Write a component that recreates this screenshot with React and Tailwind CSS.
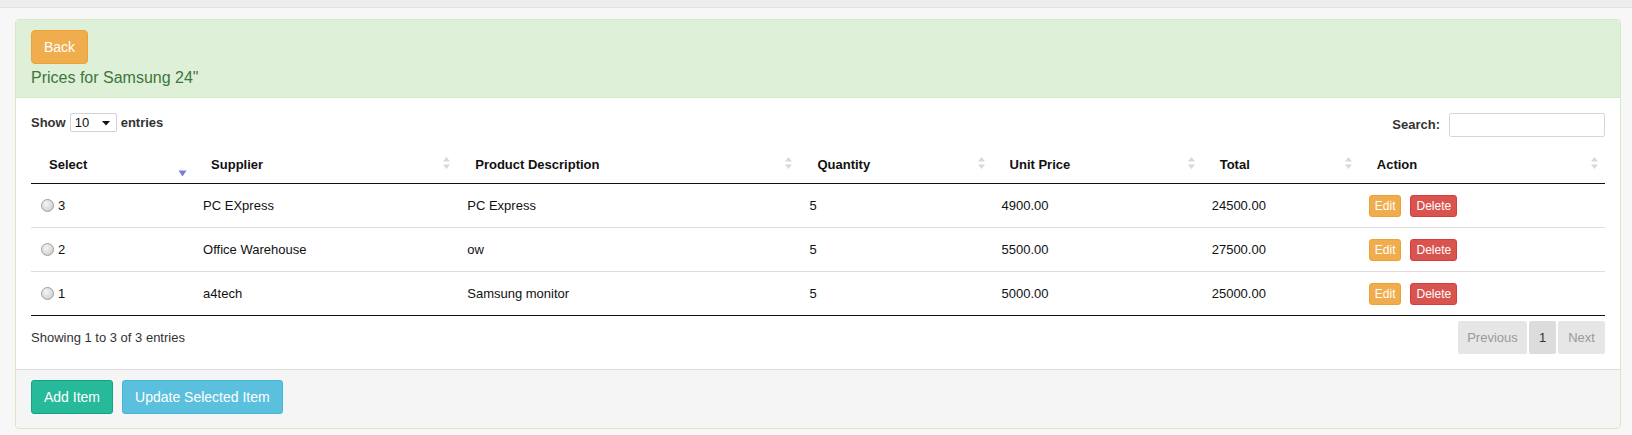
import React from 'react';

// rows shown in the price table
const prices = [
  { id: 3, supplier: 'PC EXpress', description: 'PC Express', qty: 5, unit: '4900.00', total: '24500.00' },
  { id: 2, supplier: 'Office Warehouse', description: 'ow', qty: 5, unit: '5500.00', total: '27500.00' },
  { id: 1, supplier: 'a4tech', description: 'Samsung monitor', qty: 5, unit: '5000.00', total: '25000.00' },
];

const columns = [
  { label: 'Select', width: 'w-[162px]', sort: 'asc' },
  { label: 'Supplier', width: 'w-[264px]' },
  { label: 'Product Description', width: 'w-[342px]' },
  { label: 'Quantity', width: 'w-[192px]' },
  { label: 'Unit Price', width: 'w-[210px]' },
  { label: 'Total', width: 'w-[157px]' },
  { label: 'Action', width: 'w-[246px]' },
];

const SortBoth = () => (
  <svg width="9" height="14" viewBox="0 0 9 14" className="absolute right-[6px] top-1/2 -translate-y-1/2">
    <path d="M4.5 1 L8 5.5 L1 5.5 Z" fill="#d8d8d8" />
    <path d="M4.5 13 L8 8.5 L1 8.5 Z" fill="#d8d8d8" />
  </svg>
);

const SortAsc = () => (
  <svg width="9" height="7" viewBox="0 0 9 7" className="absolute right-[6px] top-[27px]">
    <path d="M0.5 0.5 L8.5 0.5 L4.5 6.5 Z" fill="#7b7bdc" />
  </svg>
);

const Radio = () => (
  <span className="inline-block w-[13px] h-[13px] rounded-full border border-[#a0a0a0] bg-[radial-gradient(circle_at_40%_35%,#f4f4f4_0%,#dcdcdc_55%,#c4c4c4_100%)] mr-[4px] align-[-2px]" />
);

const PriceRow = ({ row, first }) => (
  <tr className={`h-[44px] ${first ? '' : 'border-t border-[#dddddd]'}`}>
    <td className="px-[10px] text-[13px] text-[#111]">
      <Radio />
      {row.id}
    </td>
    <td className="px-[10px]">{row.supplier}</td>
    <td className="px-[10px]">{row.description}</td>
    <td className="px-[10px]">{row.qty}</td>
    <td className="px-[10px]">{row.unit}</td>
    <td className="px-[10px]">{row.total}</td>
    <td className="px-[10px]">
      <div className="flex gap-[9px]">
        <span className="h-[22px] px-[5px] leading-[20px] text-[12px] text-white bg-[#f0ad4e] border border-[#eea236] rounded-[3px]">
          Edit
        </span>
        <span className="h-[22px] px-[5px] leading-[20px] text-[12px] text-white bg-[#d9534f] border border-[#d43f3a] rounded-[3px]">
          Delete
        </span>
      </div>
    </td>
  </tr>
);

export default function App() {
  return (
    <div className="min-h-[435px] bg-[#f7f7f7] font-['Liberation_Sans',Arial,sans-serif] text-[13px] text-[#333]">
      <div className="h-[8px] bg-[#ededed] border-b border-[#dfe1e8]" />
      <div className="pl-[15px] pr-[11px] pt-[11px]">
        <div className="border border-[#d6e9c6] rounded-[4px] bg-white overflow-hidden">
          {/* heading */}
          <div className="bg-[#dff0d8] border-b border-[#d6e9c6] px-[15px] pt-[10px] pb-[10px]">
            <button className="h-[34px] px-[12px] text-[14px] text-white bg-[#f0ad4e] border border-[#eea236] rounded-[4px]">
              Back
            </button>
            <h3 className="mt-[4px] text-[16px] leading-[19px] text-[#3c763d]">Prices for Samsung 24"</h3>
          </div>

          {/* body */}
          <div className="px-[15px] pt-[15px] pb-[15px]">
            <div className="flex justify-between items-start h-[30px]">
              <div className="flex items-center font-bold">
                <span>Show</span>
                <span className="relative mx-[4px] w-[47px] h-[19px] border border-[#cfd2d8] rounded-[2px] bg-white font-normal text-[#111] leading-[17px] pl-[4px]">
                  10
                  <svg width="8" height="5" viewBox="0 0 8 5" className="absolute right-[6px] top-[7px]">
                    <path d="M0 0 L8 0 L4 4.5 Z" fill="#111" />
                  </svg>
                </span>
                <span>entries</span>
              </div>
              <div className="flex items-center font-bold">
                <span className="mr-[9px]">Search:</span>
                <input className="w-[156px] h-[24px] border border-[#d5d7dc] rounded-[2px] bg-white outline-none" />
              </div>
            </div>

            <table className="w-full table-fixed border-collapse text-[#111]">
              <thead>
                <tr className="border-b border-[#111]">
                  {columns.map((c) => (
                    <th
                      key={c.label}
                      className={`${c.width} relative text-left font-bold text-[13px] pl-[18px] pr-[30px] pt-[13px] pb-[9px] leading-[18px]`}
                    >
                      {c.label}
                      {c.sort === 'asc' ? <SortAsc /> : <SortBoth />}
                    </th>
                  ))}
                </tr>
              </thead>
              <tbody className="border-b border-[#111]">
                {prices.map((row, i) => (
                  <PriceRow key={row.id} row={row} first={i === 0} />
                ))}
              </tbody>
            </table>

            <div className="flex justify-between items-center mt-[5px]">
              <span className="text-[13px] text-[#333]">Showing 1 to 3 of 3 entries</span>
              <div className="flex gap-[2px] text-[13px]">
                <span className="h-[33px] w-[69px] flex items-center justify-center bg-[#e6e6e6] text-[#999] rounded-[2px]">
                  Previous
                </span>
                <span className="h-[33px] w-[27px] flex items-center justify-center bg-[#dcdcdc] text-[#333] rounded-[2px]">
                  1
                </span>
                <span className="h-[33px] w-[47px] flex items-center justify-center bg-[#e6e6e6] text-[#999] rounded-[2px]">
                  Next
                </span>
              </div>
            </div>
          </div>

          {/* footer */}
          <div className="bg-[#f5f5f5] border-t border-[#dddddd] px-[15px] pt-[10px] pb-[14px] flex gap-[9px]">
            <button className="h-[34px] px-[12px] text-[14px] text-white bg-[#26b99a] border border-[#169f85] rounded-[3px]">
              Add Item
            </button>
            <button className="h-[34px] px-[12px] text-[14px] text-white bg-[#5bc0de] border border-[#46b8da] rounded-[3px]">
              Update Selected Item
            </button>
          </div>
        </div>
      </div>
    </div>
  );
}
